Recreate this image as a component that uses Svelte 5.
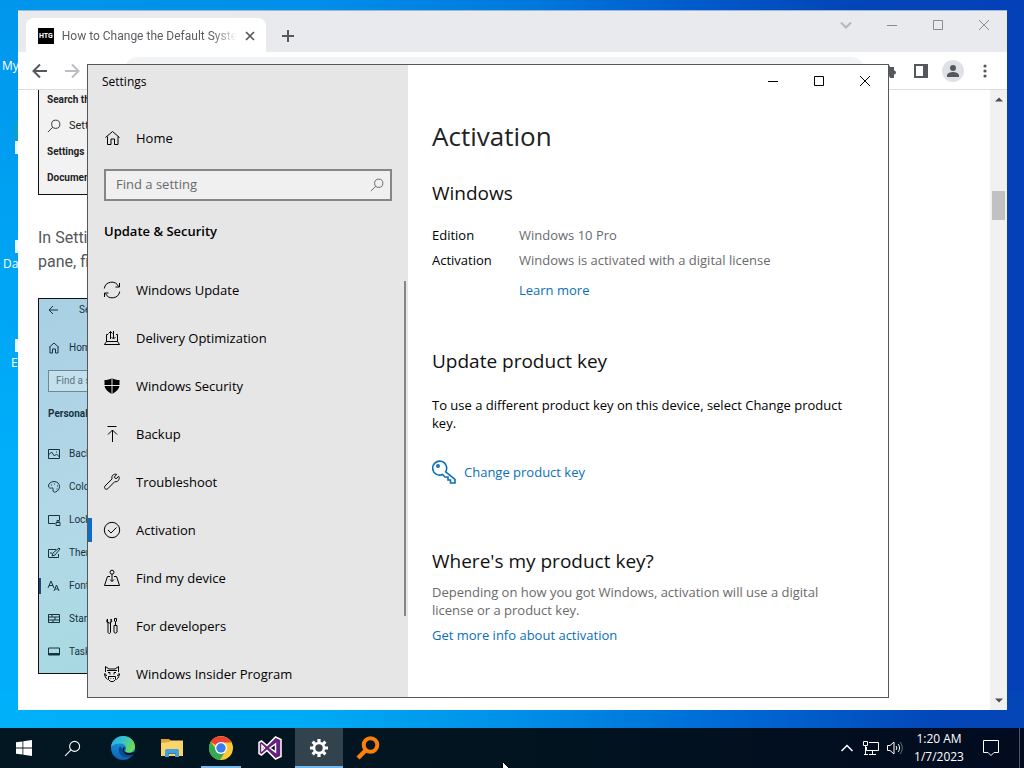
<script>
  const navItems = [
    { id: 'update', label: 'Windows Update' },
    { id: 'delivery', label: 'Delivery Optimization' },
    { id: 'security', label: 'Windows Security' },
    { id: 'backup', label: 'Backup' },
    { id: 'troubleshoot', label: 'Troubleshoot' },
    { id: 'activation', label: 'Activation' },
    { id: 'find', label: 'Find my device' },
    { id: 'developers', label: 'For developers' },
    { id: 'insider', label: 'Windows Insider Program' }
  ];
  let selected = $state('activation');
  let query = $state('');

  const figureItems = [
    { label: 'Background', d: 'M1.5 2.5h11v9h-11zM1.5 8l3-3 3 4 2-2 3 3M9 5h1' },
    { label: 'Colors', d: 'M7 1.5c-3 0-5.500 2-5.500 4.500 0 2 2 2.500 3 2 1.500-.5 2 .5 1.500 2-.3 1.500 1 2.500 2.500 2 2.500-.8 4-3 4-5.500 0-3-2.500-5-5.500-5zM4 5h1M7 4h1M10 6h1M9.500 9h1' },
    { label: 'Lock screen', d: 'M8 10.500H1.500v-8h11v5M9 9.500h4v3H9zM10 9V7.500h2V9' },
    { label: 'Themes', d: 'M9 3.500H1.500v8h10V8M5 10l1-3 6-5 1 1-5 6zM5 7H3M4 9' },
    { label: 'Fonts', d: 'M1 9l3-7 3 7M2 6.500h4M7 12l2.500-6 2.500 6M8 10h3' },
    { label: 'Start', d: 'M1.500 2.500h11v8h-11zM1.500 5h11M1.500 8h11M5 2.500V5M8 5v3M6 8v2.500' },
    { label: 'Taskbar', d: 'M1.500 3h11v7h-11zM1.500 8.500h11M1.500 9.500h11' }
  ];
</script>

{#snippet navIcon(id)}
  <svg class="line" width="18" height="18" viewBox="0 0 18 18" aria-hidden="true">
    {#if id === 'update'}
      <path d="M1.300 7.500A7.500 7.500 0 0 1 15.500 5.500M16.500 2v4h-4M16.700 10.500A7.500 7.500 0 0 1 2.500 12.500M1.500 16v-4h4" />
    {:else if id === 'delivery'}
      <path d="M5 5.500H3.500v7M13 5.500h1.500v7M3.500 12.500h11l2 3h-15zM7.500 10V2.500M5.500 4.500l2-2 2 2M10.500 2v7.500M8.500 8l2 2 2-2" />
    {:else if id === 'security'}
      <path class="solid" d="M9 1c2 1.500 4.500 2 7.500 2v5c0 4-3.500 7-7.500 9-4-2-7.500-5-7.500-9V3C4.500 3 7 2.500 9 1z" />
      <path class="cut" d="M9 1v16M1 8.500h16" />
    {:else if id === 'backup'}
      <path d="M4.500 1.500h9M9.500 17V5M5 9.500L9.500 5l4.500 4.500" />
    {:else if id === 'troubleshoot'}
      <path d="M15.800 3.300l-2.800 2.500-1.800-1.600 2.500-2.800c-3.200-1-5.700 1.600-4.600 4.500L2 13c-1.500 2 .8 4.300 2.700 2.800l7.100-7.200c3 1 5.300-2.300 4-5.300z" />
    {:else if id === 'activation'}
      <circle cx="9" cy="9" r="7.700" /><path d="M5 9l3 3 5.500-5.500" />
    {:else if id === 'find'}
      <circle cx="9" cy="3.200" r="2" /><path d="M9 5.200v7.300M7 7.500H4.500L1.500 16.500h15l-3-9H11M7 10.500l2 2 2-2" />
    {:else if id === 'developers'}
      <path d="M4.500 2v3l2 1 1.500-1V2M5 6v9.500c.5 1.300 2 1.300 2.500 0V6M4.500 2C3 4 4 6 5 6M8 2c1.300 2 .5 3.500-.5 4M11 8.500h3v6.500c-.5 1.500-2.500 1.500-3 0zM12.500 8.500V5M11.500 1.500h2v2.500l-1 1-1-1z" />
    {:else}
      <path d="M2.500 7V1.500L6 4h6l3.500-2.500V7M4 5.500h10M2 8c-.5 3 .5 5 2.500 6.500M16 8c.5 3-.5 5-2.500 6.500M1 9.500l3 1M17 9.500l-3 1M5 7.500h2v2M13 7.500h-2v2M5.500 11.500h7v3l-2 2h-3l-2-2zM7.500 13.500h.7M10 13.500h.7" />
    {/if}
  </svg>
{/snippet}

{#snippet glass(size)}
  <svg class="line" width={size} height={size} viewBox="0 0 16 16" aria-hidden="true">
    <circle cx="10" cy="6" r="4.700" /><path d="M6.600 9.400L1 15" />
  </svg>
{/snippet}

<div class="desktop">
  <div class="shortcut first"><i class="green"></i><span>My</span></div>
  <i class="sliver one"></i><i class="sliver two"></i><i class="sliver three"></i>
  <div class="shortcut second"><span>Da</span></div>
  <div class="shortcut third"><span>E</span></div>

  <section class="browser" aria-label="Browser">
    <header class="tabstrip">
      <div class="tab">
        <b class="favicon">HTG</b>
        <span class="tab-title">How to Change the Default Syste</span>
        <button aria-label="Close tab">
          <svg width="10" height="10" viewBox="0 0 10 10"><path d="M1 1l8 8M9 1L1 9" /></svg>
        </button>
      </div>
      <button class="newtab" aria-label="New tab">
        <svg width="14" height="14" viewBox="0 0 14 14"><path d="M7 1v12M1 7h12" /></svg>
      </button>
      <div class="caption faded">
        <button aria-label="Search tabs"><svg width="12" height="12" viewBox="0 0 12 12"><path class="thick" d="M1 3.500l5 5 5-5" /></svg></button>
        <button aria-label="Minimize browser"><svg width="10" height="10" viewBox="0 0 10 10"><path d="M0 5.500h10" /></svg></button>
        <button aria-label="Maximize browser"><svg width="10" height="10" viewBox="0 0 10 10"><path d="M.5.5h9v9h-9z" /></svg></button>
        <button aria-label="Close browser"><svg width="10" height="10" viewBox="0 0 10 10"><path d="M0 0l10 10M10 0L0 10" /></svg></button>
      </div>
    </header>
    <div class="toolbar">
      <button aria-label="Back"><svg width="16" height="16" viewBox="0 0 16 16"><path d="M15 8H2M8 1.500L1.500 8 8 14.500" /></svg></button>
      <button class="dim" aria-label="Forward"><svg width="16" height="16" viewBox="0 0 16 16"><path d="M1 8h13M8 1.500L14.500 8 8 14.500" /></svg></button>
      <div class="omnibox"></div>
      <button aria-label="Extensions"><svg width="16" height="16" viewBox="0 0 16 16"><path class="fill" d="M1 4h4a2 2 0 0 1 4 0h4v3.500a2 2 0 0 1 0 4V15H9a2 2 0 0 0-4 0H1z" /></svg></button>
      <button aria-label="Side panel"><svg width="14" height="14" viewBox="0 0 14 14"><path d="M1 1h12v12H1z" /><path class="fill" d="M9 1h4v12H9z" /></svg></button>
      <button aria-label="Profile"><svg width="22" height="22" viewBox="0 0 22 22"><circle class="disc" cx="11" cy="11" r="11" /><circle class="fill" cx="11" cy="8" r="3" /><path class="fill" d="M5 17v-1.500c0-2.500 4-3.500 6-3.500s6 1 6 3.500V17z" /></svg></button>
      <button aria-label="Menu"><svg width="14" height="14" viewBox="0 0 14 14"><g class="fill"><circle cx="7" cy="2" r="1.600" /><circle cx="7" cy="7" r="1.600" /><circle cx="7" cy="12" r="1.600" /></g></svg></button>
    </div>
    <div class="viewport">
      <article>
        <div class="figure menu">
          <b>Search the</b>
          <span class="found">{@render glass(14)} Settings</span>
          <b>Settings</b>
          <b>Documents</b>
        </div>
        <p>In Settings<br />pane, find</p>
        <div class="figure panel">
          <div class="mini top"><svg class="line" width="14" height="14" viewBox="0 0 14 14"><path d="M11 7H2M6 3L2 7l4 4" /></svg><span>Settings</span></div>
          <div class="mini home"><svg class="line" width="14" height="14" viewBox="0 0 14 14"><path d="M2 6.500L7 2l5 4.500M3 6v6h2.500V8h3v4H11V6" /></svg><span>Home</span></div>
          <div class="mini-search">Find a setting</div>
          <b class="mini-title">Personalization</b>
          {#each figureItems as item}
            <div class="mini" class:current={item.label === 'Fonts'}>
              <svg class="line" width="14" height="14" viewBox="0 0 14 14"><path d={item.d} /></svg><span>{item.label}</span>
            </div>
          {/each}
        </div>
      </article>
      <div class="scrollbar">
        <svg width="8" height="5" viewBox="0 0 8 5"><path d="M0 4.500L4 .5l4 4z" /></svg>
        <i class="thumb"></i>
        <svg width="8" height="5" viewBox="0 0 8 5"><path d="M0 .5l4 4 4-4z" /></svg>
      </div>
    </div>
  </section>

  <section class="settings" aria-label="Settings window">
    <aside>
      <div class="title">Settings</div>
      <a class="row home-row" href="#home">
        <svg class="line" width="18" height="18" viewBox="0 0 18 18"><path d="M2.500 8.500l7-6 7 6M4.500 7.500v8H8V10h3.500v5.500h3.500v-8" /></svg>
        <span>Home</span>
      </a>
      <label class="search">
        <input type="text" placeholder="Find a setting" aria-label="Find a setting" bind:value={query} />
        {@render glass(14)}
      </label>
      <h3>Update &amp; Security</h3>
      <nav>
        {#each navItems as item}
          <a
            class="row"
            class:active={selected === item.id}
            href={'#' + item.id}
            onclick={() => (selected = item.id)}
          >
            {@render navIcon(item.id)}
            <span>{item.label}</span>
          </a>
        {/each}
      </nav>
    </aside>
    <main>
      <div class="caption">
        <button aria-label="Minimize"><svg width="10" height="10" viewBox="0 0 10 10"><path d="M0 5.500h10" /></svg></button>
        <button aria-label="Maximize"><svg width="10" height="10" viewBox="0 0 10 10"><path d="M.5.5h9v9h-9z" /></svg></button>
        <button aria-label="Close"><svg width="10" height="10" viewBox="0 0 10 10"><path d="M0 0l10 10M10 0L0 10" /></svg></button>
      </div>
      <div class="content">
        <h1>Activation</h1>
        <h2>Windows</h2>
        <dl>
          <dt>Edition</dt>
          <dd>Windows 10 Pro</dd>
          <dt>Activation</dt>
          <dd>Windows is activated with a digital license</dd>
        </dl>
        <a class="learn" href="#learn">Learn more</a>
        <h2 class="key-title">Update product key</h2>
        <p>To use a different product key on this device, select Change product key.</p>
        <a class="change" href="#change">
          <svg width="24" height="24" viewBox="0 0 24 24" aria-hidden="true">
            <path d="M13.600 11.800A7 7 0 1 0 10.500 14.500L13 17h3v3h2.500v3H23v-3.500z" />
            <circle cx="6" cy="6" r="1.200" />
          </svg>
          Change product key
        </a>
        <h2 class="where-title">Where's my product key?</h2>
        <p class="note">Depending on how you got Windows, activation will use a digital license or a product key.</p>
        <a class="more" href="#more">Get more info about activation</a>
      </div>
    </main>
  </section>

  <footer class="taskbar">
    <div class="system">
      <button aria-label="Start"><svg width="16" height="16" viewBox="0 0 16 16"><path fill="#fff" d="M0 2.300L6.500 1.400v6.200H0zM7.300 1.300L16 0v7.600H7.300zM0 8.400h6.500v6.200L0 13.700zM7.300 8.400H16V16l-8.700-1.300z" /></svg></button>
      <button aria-label="Search">{@render glass(17)}</button>
    </div>
    <div class="apps">
      <button aria-label="Edge">
        <svg width="24" height="24" viewBox="0 0 24 24">
          <defs>
            <linearGradient id="edge-top" x1="0" y1="0" x2="1" y2=".4"><stop offset="0" stop-color="#25a9e8" /><stop offset=".5" stop-color="#35c1cf" /><stop offset="1" stop-color="#66dc58" /></linearGradient>
            <linearGradient id="edge-low" x1="0" y1="0" x2="0" y2="1"><stop offset="0" stop-color="#1b9de2" /><stop offset="1" stop-color="#0c62b8" /></linearGradient>
          </defs>
          <circle cx="12" cy="12" r="12" fill="url(#edge-low)" />
          <path fill="#0d4a8e" d="M9 10c-3 5 0 11 6.500 11.500 3 .2 5.500-1 7-3.500-5 2.500-11 1-10.500-4z" />
          <path fill="#02131f" d="M12.500 11c3 1-.5 3 1 4.500 2 2 6 2 9 .5l1 .5-1.500 2c-4 1.500-9 .5-10-3.500-.2-1.500-.5-3 .5-4z" />
          <path fill="url(#edge-top)" d="M0 11C1 4 6 0 12 0c7 0 12 5 12 10.500 0 4-3 6-6 6-2.500 0-4-1-3.500-2 2-3-.5-7-5-7-4 0-7.500 1-9.500 3.500z" />
        </svg>
      </button>
      <button aria-label="File Explorer">
        <svg width="22" height="20" viewBox="0 0 22 20"><path fill="#e5a33a" d="M0 1h8l2 2v4H0z" /><path fill="#fad56c" d="M0 5l8-1 1.500-1.500H22V18H0z" /><path fill="#459fd8" d="M4 19v-6c0-1.500 1-2 2-2h10c1 0 2 .5 2 2v6h-4v-3.500H8V19z" /><path fill="#2e7cb0" d="M7 15h8v1H7z" /></svg>
      </button>
      <button class="running" aria-label="Chrome">
        <svg width="24" height="24" viewBox="0 0 24 24"><circle cx="12" cy="12" r="12" fill="#fcc934" /><path fill="#ea4335" d="M12 12L1.600 6A12 12 0 0 1 22.400 6.500H12z" /><path fill="#34a853" d="M1.600 6A12 12 0 0 0 11 24l6-9.500-5-2.500-4 2z" /><circle cx="12" cy="12" r="6" fill="#fff" /><circle cx="12" cy="12" r="4.700" fill="#3b7ded" /></svg>
      </button>
      <button aria-label="Visual Studio">
        <svg width="24" height="24" viewBox="0 0 24 24"><path fill="#68217a" stroke="#fff" stroke-width="1.500" fill-rule="evenodd" d="M17.500 1l5.500 2.500v17L17.500 23 9 14.500 3.500 19 1 17.500v-11L3.500 5 9 9.500zM17.500 8L12 12l5.500 4zM4 9.500v5L6.500 12z" /></svg>
      </button>
      <button class="focused" aria-label="Settings">
        <svg width="18" height="18" viewBox="0 0 18 18"><circle cx="9" cy="9" r="5" fill="none" stroke="#fff" stroke-width="2.600" /><path stroke="#fff" stroke-width="3.200" d="M9 0v3M9 15v3M0 9h3M15 9h3M2.600 2.600l2.200 2.200M13.200 13.200l2.200 2.200M15.400 2.600l-2.200 2.200M4.800 13.200l-2.200 2.200" /></svg>
      </button>
      <button aria-label="Everything">
        <svg width="24" height="24" viewBox="0 0 24 24"><circle cx="14.500" cy="9" r="6.800" fill="none" stroke="#fb7f09" stroke-width="4" /><path stroke="#fb7f09" stroke-width="4.500" d="M9.500 14.500L2 22" /></svg>
      </button>
    </div>
    <div class="tray">
      <button aria-label="Hidden icons"><svg class="line" width="14" height="8" viewBox="0 0 14 8"><path class="bold" d="M1.500 7L7 1.500 12.500 7" /></svg></button>
      <button aria-label="Network"><svg class="line" width="18" height="16" viewBox="0 0 18 16"><path d="M7 2.500h9.500v8H4.500V7M1.500 1.500h4v4h-4zM3.500 5.500V14M2 14.500h4M10.500 10.500v4M7 14.500h7" /></svg></button>
      <button aria-label="Volume"><svg class="line" width="18" height="16" viewBox="0 0 18 16"><path d="M1.500 5.500h2.500l4-3.500v12l-4-3.500H1.500zM10 6c1 1.200 1 3 0 4M12 4c2 2 2 6 0 8" /><path opacity=".4" d="M14 2c3 3.500 3 8.500 0 12" /></svg></button>
      <div class="clock"><time>1:20 AM</time><span>1/7/2023</span></div>
      <button class="action" aria-label="Notifications"><svg class="line" width="18" height="18" viewBox="0 0 18 18"><path d="M1.500 1.500h15v12H12L9 16.500l-3-3H1.500z" /></svg></button>
      <button class="peek" aria-label="Show desktop"></button>
    </div>
  </footer>
  <svg class="cursor" width="12" height="18" viewBox="0 0 12 18" aria-hidden="true"><path d="M.5.5v15l3.500-3.500 2.500 5 2-1-2.500-5h5z" /></svg>
</div>

<style>
  :global(body) { overflow: hidden; }
  * { box-sizing: border-box; }
  .desktop {
    position: relative; height: 100vh; overflow: hidden; color: #000;
    font: 13px/18px "Open Sans", "Noto Sans", sans-serif;
    background:
      linear-gradient(90deg, #00b0f9 0, #00abf5 30%, #0090e8 50%, #0068d4 72%, #0446b8 92%) bottom / 100% 10% no-repeat,
      linear-gradient(180deg, rgba(0, 176, 252, 0) 0, #00aefa 60%) left / 2% 100% no-repeat,
      linear-gradient(90deg, #0096ec 0, #008fea 30%, #0078dc 52%, #005acb 68%, #0346b8 82%, #0440b8 100%);
  }
  button { margin: 0; padding: 0; border: 0; background: none; color: inherit; font: inherit; display: flex; align-items: center; justify-content: center; }
  a { color: inherit; text-decoration: none; }
  h1, h2, h3, p, dl, dd { margin: 0; font-weight: 400; }
  svg { flex: none; display: block; }
  .line { fill: none; stroke: currentColor; stroke-width: 1; }

  .shortcut { position: absolute; color: #fff; font-size: 12px; line-height: 16px; }
  .first { left: 2px; top: 58px; }
  .second { left: 3px; top: 256px; }
  .third { left: 11px; top: 355px; }
  .green { position: absolute; left: 11px; top: 64px; width: 6px; height: 18px; background: linear-gradient(90deg, rgba(26, 163, 148, 0), #1aa394); }
  .sliver { position: absolute; left: 15px; width: 4px; height: 13px; background: #e8f6fd; }
  .one { top: 141px; }
  .two { top: 240px; }
  .three { top: 339px; }

  .browser { position: absolute; inset: 10px 17px 58px 18px; display: flex; flex-direction: column; background: #fff; border-top: 1px solid #9db9d4; }
  .tabstrip { display: flex; height: 41px; padding-left: 8px; background: #e8eaed; color: #45494d; }
  .tab { display: flex; align-items: center; gap: 8px; width: 240px; height: 34px; margin-top: 7px; padding: 2px 11px 0 12px; background: #fff; border-radius: 8px 8px 0 0; }
  .tab svg, .newtab svg, .toolbar svg { fill: none; stroke: #54585c; stroke-width: 2; }
  .tab svg { stroke-width: 1.700; }
  .favicon { width: 16px; height: 16px; background: #000; color: #fff; font: 700 7px/16px Roboto, sans-serif; text-align: center; }
  .tab-title { flex: 1; white-space: nowrap; font-family: Roboto, sans-serif; font-size: 12px; color: #5a5d61; mask-image: linear-gradient(90deg, #000 86%, transparent); }
  .newtab { width: 28px; height: 28px; margin: 11px 0 0 8px; }
  .caption { display: flex; justify-content: flex-end; }
  .caption button { width: 46px; height: 32px; }
  .caption svg { fill: none; stroke: currentColor; stroke-width: 1; }
  .faded { margin-left: auto; color: #8a8b8e; }
  .faded button { height: 28px; }
  .thick { stroke-width: 2; stroke: #b4b6b9; }
  .toolbar { display: flex; align-items: center; height: 38px; padding: 0 6px; border-bottom: 1px solid #dadce0; }
  .toolbar button { width: 32px; height: 32px; }
  .toolbar .dim svg { stroke: #bcbec1; }
  .toolbar .fill { fill: #54585c; stroke: none; }
  .toolbar .disc { fill: #dee1e6; stroke: none; }
  .omnibox { flex: 1; height: 28px; margin: 0 8px 0 36px; background: #f1f3f4; border-radius: 14px; }
  .viewport { flex: 1; min-height: 0; display: flex; overflow: hidden; }
  article { flex: 1; padding-left: 20px; }
  .figure { width: 320px; border: 1px solid #111; color: #222; font: 10px/14px Roboto, sans-serif; }
  .menu { display: flex; flex-direction: column; gap: 12px; height: 105px; padding: 3px 8px; border-top: 0; background: #f2f2f2; }
  .menu b { font-weight: 700; }
  .menu .found { display: flex; align-items: center; gap: 8px; font-size: 11px; }
  article p { margin: 31px 0 24px; font: 16px/24px Roboto, sans-serif; color: #54575a; }
  .panel { height: 376px; background: linear-gradient(160deg, #a9cfe4, #b3d8e7 45%, #a6dae2 85%, #bcd4e2); color: #17323f; }
  .mini { display: flex; align-items: center; gap: 8px; height: 33px; padding-left: 8px; }
  .mini.top { height: 22px; gap: 18px; }
  .mini.home { height: 54px; }
  .mini-search { width: 280px; height: 22px; margin: -5px 0 0 9px; padding: 3px 7px; border: 1px solid #6d8794; background: #c3e0ec; color: #5c7480; }
  .mini-title { display: block; margin: 15px 0 16px 9px; font-weight: 700; }
  .current { background: linear-gradient(#1c4a78, #1c4a78) left center / 2px 16px no-repeat; }
  .scrollbar { display: flex; flex-direction: column; align-items: center; width: 17px; padding: 7px 0; background: #f1f1f1; }
  .scrollbar svg { fill: #4d4d4d; }
  .thumb { width: 13px; height: 29px; margin: 89px 0 auto; background: #c1c1c1; }

  .settings { position: absolute; inset: 64px 135px 70px 87px; display: flex; border: 1px solid #55585b; background: #fff; }
  aside { display: flex; flex-direction: column; width: 320px; background: #e6e6e6; overflow: hidden; }
  .title { height: 34px; padding-left: 14px; font-size: 12px; line-height: 34px; }
  .row { display: flex; align-items: center; gap: 15px; height: 48px; padding-left: 15px; }
  .home-row { height: 40px; margin-top: 19px; }
  .search { display: flex; align-items: center; height: 32px; margin: 11px 16px 0; padding: 0 6px 0 10px; border: 2px solid #868686; background: #f0f0f0; color: #5c5c5c; }
  .search input { flex: 1; min-width: 0; border: 0; padding: 0 0 2px; outline: 0; background: none; font: inherit; color: #222; }
  .search input::placeholder { color: #6a6a6a; opacity: 1; }
  h3 { margin: 20px 16px 25px; font-size: 13px; line-height: 20px; font-weight: 600; }
  nav { flex: 1; min-height: 0; overflow: hidden; background: linear-gradient(#868686, #868686) calc(100% - 2px) 15px / 2px 335px no-repeat; }
  .active { background: linear-gradient(#0f6cc6, #0f6cc6) left center / 4px 24px no-repeat; }
  .solid { fill: #000; stroke: none; }
  .cut { stroke: #e6e6e6; }
  main { flex: 1; min-width: 0; }
  .content { padding: 21px 32px 0 24px; }
  h1 { font-size: 26px; line-height: 36px; color: #222; }
  h2 { margin-top: 25px; font-size: 19px; line-height: 28px; color: #111; }
  dl { display: grid; grid-template-columns: 87px 1fr; row-gap: 5px; margin-top: 18px; line-height: 20px; }
  dd, .note { color: #6a6a6a; }
  .learn, .change, .more { color: #0a6fb8; line-height: 20px; }
  .learn { display: block; width: fit-content; margin: 10px 0 0 87px; }
  .key-title { margin-top: 47px; }
  .content p { margin-top: 21px; }
  .change { display: flex; align-items: center; gap: 8px; width: fit-content; height: 24px; margin-top: 28px; }
  .change svg { fill: none; stroke: currentColor; stroke-width: 1.600; }
  .where-title { margin-top: 63px; }
  .content .note { margin-top: 8px; }
  .more { display: block; width: fit-content; margin-top: 6px; }

  .taskbar { position: absolute; inset: auto 0 0; display: flex; gap: 3px; height: 40px; background: linear-gradient(90deg, #021722, #021420 50%, #020b20); color: #fff; }
  .system, .apps { display: flex; }
  .apps { gap: 1px; }
  .system button, .apps button { width: 48px; height: 40px; }
  .running { background: linear-gradient(#76b9ed, #76b9ed) center bottom / 40px 2px no-repeat; }
  .focused { background: #33434d linear-gradient(#76b9ed, #76b9ed) center bottom / 48px 2px no-repeat; }
  .tray { display: flex; margin-left: auto; }
  .tray button { width: 24px; }
  .bold { stroke-width: 1.500; }
  .clock { display: flex; flex-direction: column; justify-content: center; width: 56px; margin-left: 4px; font-size: 12px; text-align: center; }
  .tray .action { width: 48px; margin-right: 4px; }
  .tray .peek { width: 5px; border-left: 1px solid #4d5662; }
  .cursor { position: absolute; left: 502px; bottom: -11px; fill: #fff; stroke: #000; }
</style>
